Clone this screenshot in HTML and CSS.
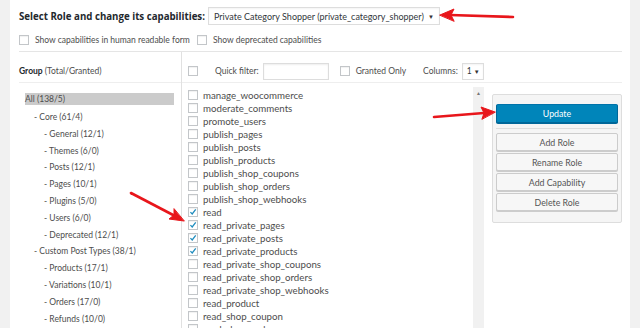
FILE: index.html
```html
<!DOCTYPE html>
<html lang="en">
  <head>
    <meta charset="UTF-8" />
    <title>Role capabilities</title>
    <link rel="stylesheet" href="styles.css">
  </head>
  <body>
    <div class="panel">
      <div class="role-row">
        <span class="role-title">Select Role and change its capabilities:</span>
        <div class="select role-select">
          <span>Private Category Shopper (private_category_shopper)</span>
          <span class="caret">&#9660;</span>
        </div>
      </div>

      <div class="options-row">
        <label class="opt"><span class="cb"></span>Show capabilities in human readable form</label>
        <label class="opt"><span class="cb"></span>Show deprecated capabilities</label>
      </div>

      <hr />

      <div class="editor">
        <div class="groups">
          <div class="col-head">
            <span><b>Group</b> (Total/Granted)</span>
          </div>
          <ul class="tree">
            <li class="active">All (138/5)</li>
            <li class="lvl1">- Core (61/4)</li>
            <li class="lvl2">- General (12/1)</li>
            <li class="lvl2">- Themes (6/0)</li>
            <li class="lvl2">- Posts (12/1)</li>
            <li class="lvl2">- Pages (10/1)</li>
            <li class="lvl2">- Plugins (5/0)</li>
            <li class="lvl2">- Users (6/0)</li>
            <li class="lvl2">- Deprecated (12/1)</li>
            <li class="lvl1">- Custom Post Types (38/1)</li>
            <li class="lvl2">- Products (17/1)</li>
            <li class="lvl2">- Variations (10/1)</li>
            <li class="lvl2">- Orders (17/0)</li>
            <li class="lvl2">- Refunds (10/0)</li>
          </ul>
        </div>

        <div class="caps">
          <div class="col-head caps-head">
            <span class="cb"></span>
            <span class="filter-label">Quick filter:</span>
            <span class="filter-input"></span>
            <label class="opt granted"><span class="cb"></span>Granted Only</label>
            <span class="columns-label">Columns:</span>
            <div class="select columns-select"><span>1</span><span class="caret">&#9660;</span></div>
          </div>

          <div class="caps-body">
            <ul class="cap-list" id="cap-list"></ul>
            <div class="scrollbar"><span class="scroll-up">&#9650;</span></div>
            <div class="side">
              <div class="actions">
                <button class="btn btn-primary">Update</button>
                <div class="sep"></div>
                <button class="btn">Add Role</button>
                <button class="btn">Rename Role</button>
                <button class="btn">Add Capability</button>
                <button class="btn">Delete Role</button>
              </div>
            </div>
          </div>
        </div>
      </div>
    </div>

    <svg class="arrows" width="640" height="328" viewBox="0 0 640 328">
      <g stroke="#e8161b" stroke-width="2.6" stroke-linecap="round" fill="#e8161b">
        <line x1="513" y1="17" x2="450" y2="15" />
        <polygon points="440,15 454,9 451,15 454,21" stroke-width="1" />
        <line x1="434" y1="117" x2="484" y2="113" />
        <polygon points="495,112 481,107 484,113 482,119" stroke-width="1" />
        <line x1="131" y1="193" x2="175" y2="216" />
        <polygon points="184,221 169,219 174,215 174,209" stroke-width="1" />
      </g>
    </svg>

    <script>
      const caps = [
        ["manage_woocommerce", false],
        ["moderate_comments", false],
        ["promote_users", false],
        ["publish_pages", false],
        ["publish_posts", false],
        ["publish_products", false],
        ["publish_shop_coupons", false],
        ["publish_shop_orders", false],
        ["publish_shop_webhooks", false],
        ["read", true],
        ["read_private_pages", true],
        ["read_private_posts", true],
        ["read_private_products", true],
        ["read_private_shop_coupons", false],
        ["read_private_shop_orders", false],
        ["read_private_shop_webhooks", false],
        ["read_product", false],
        ["read_shop_coupon", false],
        ["read_shop_orders", false]
      ];

      const check =
        '<svg width="10" height="10" viewBox="0 0 10 10"><path d="M1.8 5.2 L4 7.4 L8.4 1.8" fill="none" stroke="#1e8cbe" stroke-width="1.6"/></svg>';

      const list = document.querySelector("#cap-list");
      caps.forEach(function (c) {
        const li = document.createElement("li");
        li.innerHTML =
          '<span class="cb">' + (c[1] ? check : "") + "</span>" + c[0];
        list.appendChild(li);
      });
    </script>
  </body>
</html>
```

FILE: styles.css
```css
* {
  box-sizing: border-box;
}

body {
  margin: 0;
  padding: 0 10px;
  background-color: #f1f1f1;
  font-family: Lato, "Open Sans", sans-serif;
  font-size: 8.5px;
  color: #4d4d4d;
  height: 328px;
  overflow: hidden;
  position: relative;
}

.panel {
  background-color: #fff;
  height: 328px;
  padding-left: 9px;
  padding-right: 8px;
  white-space: nowrap;
}

ul {
  list-style: none;
  margin: 0;
  padding: 0;
}

.role-row {
  display: flex;
  align-items: center;
  height: 25px;
  padding-top: 7px;
}

.role-title {
  font-family: "Open Sans", sans-serif;
  font-weight: bold;
  font-size: 9.7px;
  color: #23282d;
  width: 189px;
  flex: none;
}

.select {
  display: flex;
  align-items: center;
  justify-content: space-between;
  border: 1px solid #ddd;
  background-color: #fff;
  color: #32373c;
  box-shadow: inset 0 1px 2px rgba(0, 0, 0, 0.05);
}

.role-select {
  width: 232px;
  height: 18px;
  padding: 0 5px 0 5px;
  font-size: 9px;
  flex: none;
}

.caret {
  font-size: 6px;
  color: #333;
}

.options-row {
  display: flex;
  align-items: center;
  height: 13px;
  margin-top: 8px;
}

.opt {
  display: flex;
  align-items: center;
}

.opt .cb {
  margin-right: 6px;
}

.options-row .opt:first-child {
  width: 178px;
}

.cb {
  display: inline-flex;
  width: 10px;
  height: 10px;
  border: 1px solid #c3c6c9;
  background-color: #fff;
  flex: none;
  box-shadow: inset 0 1px 1px rgba(0, 0, 0, 0.06);
  align-items: center;
  justify-content: center;
}

.cb svg {
  display: block;
}

hr {
  border: 0;
  border-top: 1px solid #e5e5e5;
  margin: 5px 0 0 0;
}

.editor {
  display: grid;
  grid-template-columns: 163px 1fr;
  height: 276px;
}

.col-head {
  display: flex;
  align-items: center;
  height: 31px;
  padding-top: 8px;
  border-bottom: 1px solid #eee;
}

.col-head b {
  color: #23282d;
}

.groups {
  border-right: 1px solid #e1e1e1;
}

.tree {
  padding: 10px 7px 0 6px;
}

.tree li {
  height: 12px;
  line-height: 12px;
  margin-bottom: 4.8px;
}

.tree li.active {
  background-color: #cbcbcb;
  margin-bottom: 6px;
}

.tree .lvl1 {
  padding-left: 9px;
}

.tree .lvl2 {
  padding-left: 19px;
}

.caps-head {
  padding-left: 6px;
}

.filter-label {
  margin-left: 17px;
}

.filter-input {
  width: 66px;
  height: 17px;
  margin-left: 4px;
  border: 1px solid #ddd;
  box-shadow: inset 0 1px 2px rgba(0, 0, 0, 0.07);
}

.granted {
  margin-left: 11px;
}

.columns-label {
  margin-left: 17px;
}

.columns-select {
  width: 22px;
  height: 17px;
  margin-left: 4px;
  padding: 0 3px 0 4px;
}

.caps-body {
  display: flex;
  height: 245px;
}

.cap-list {
  width: 291px;
  padding: 5px 0 0 6px;
  font-size: 9.7px;
}

.cap-list li {
  display: flex;
  align-items: center;
  height: 13px;
}

.cap-list .cb {
  margin-right: 5px;
}

.scrollbar {
  width: 11px;
  margin-top: 4px;
  background-color: #f1f1f1;
  text-align: center;
}

.scroll-up {
  display: block;
  font-size: 5px;
  color: #777;
  margin-top: 3px;
}

.side {
  flex: 1;
  padding: 11px 0 0 8px;
}

.actions {
  border: 1px solid #ddd;
  border-radius: 2px;
  background-color: #f5f5f5;
  padding: 9px 3px 11px 3px;
}

.btn {
  display: block;
  width: 100%;
  height: 18px;
  margin-top: 2px;
  padding: 0;
  font-family: Lato, "Open Sans", sans-serif;
  font-size: 8.8px;
  color: #555;
  background-color: #f7f7f7;
  border: 1px solid #ccc;
  border-radius: 2px;
  box-shadow: 0 1px 0 #ccc;
}

.btn-primary {
  height: 19px;
  margin-top: 0;
  color: #fff;
  background-color: #0085ba;
  border-color: #0073aa #006799 #006799;
  box-shadow: 0 1px 0 #006799;
}

.sep {
  border-top: 1px solid #ddd;
  margin: 5px 0 4px 0;
}

.arrows {
  position: absolute;
  left: 0;
  top: 0;
  pointer-events: none;
}
```
